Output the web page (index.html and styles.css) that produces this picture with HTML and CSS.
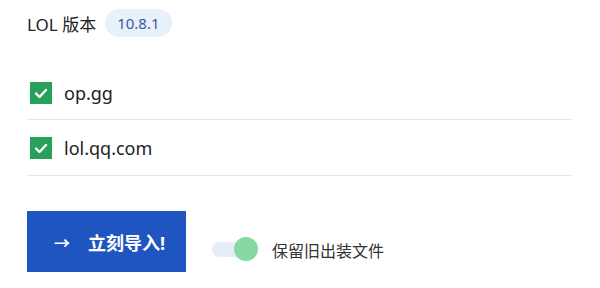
FILE: index.html
```html
<!DOCTYPE html>
<html lang="zh">
<head>
    <meta charset="UTF-8">
    <title>导入</title>
    <link rel="stylesheet" href="styles.css">
</head>
<body>
    <div class="panel">
        <div class="version-row">
            <span class="version-label">LOL 版本</span>
            <span class="version-badge">10.8.1</span>
        </div>
        <div class="sources">
            <div class="source-item">
                <span class="check">
                    <svg viewBox="0 0 22 22" width="22" height="22"><path d="M6 11.5l3.5 3.5 6.5-7" fill="none" stroke="#fff" stroke-width="2.4" stroke-linecap="round" stroke-linejoin="round"/></svg>
                </span>
                <span class="source-name">op.gg</span>
            </div>
            <div class="source-item">
                <span class="check">
                    <svg viewBox="0 0 22 22" width="22" height="22"><path d="M6 11.5l3.5 3.5 6.5-7" fill="none" stroke="#fff" stroke-width="2.4" stroke-linecap="round" stroke-linejoin="round"/></svg>
                </span>
                <span class="source-name">lol.qq.com</span>
            </div>
        </div>
        <div class="actions">
            <button class="import-btn"><span class="arrow">→</span>立刻导入!</button>
            <label class="toggle">
                <span class="track"><span class="knob"></span></span>
                <span class="toggle-text">保留旧出装文件</span>
            </label>
        </div>
    </div>
</body>
</html>
```

FILE: styles.css
```css
* {
    margin: 0;
    padding: 0;
    box-sizing: border-box;
    font-family: "Noto Sans", "Noto Sans CJK SC", sans-serif;
}
body, html {
    width: 100%;
    height: 100%;
    overflow: hidden;
    background: white;
}
.panel {
    padding: 9px 28px 0 27px;
    display: flex;
    flex-direction: column;
}
.version-row {
    display: flex;
    align-items: center;
    gap: 9px;
    height: 28px;
}
.version-label {
    font-size: 17px;
    color: #222;
}
.version-badge {
    background: #e8f0fb;
    color: #3a5a98;
    font-size: 15px;
    height: 28px;
    line-height: 28px;
    padding: 0 12px;
    border-radius: 14px;
}
.sources {
    margin-top: 34px;
    display: flex;
    flex-direction: column;
}
.source-item {
    display: flex;
    align-items: center;
    gap: 12px;
    height: 56px;
    padding-left: 3px;
    border-bottom: 1px solid #e6e6e6;
}
.source-item:first-child {
    height: 49px;
    padding-bottom: 4px;
}
.check {
    width: 22px;
    height: 22px;
    background: #27a05a;
    display: flex;
}
.source-name {
    font-size: 18px;
    color: #222;
}
.actions {
    margin-top: 35px;
    display: flex;
    align-items: center;
    gap: 26px;
}
.import-btn {
    width: 159px;
    height: 61px;
    border: none;
    background: #1f55c1;
    color: white;
    font-size: 18px;
    font-weight: bold;
    display: flex;
    align-items: center;
    padding-left: 27px;
}
.arrow {
    margin-right: 18px;
    font-size: 16px;
}
.toggle {
    display: flex;
    align-items: center;
    gap: 14px;
    margin-top: 16px;
}
.track {
    position: relative;
    width: 38px;
    height: 15px;
    border-radius: 8px;
    background: #e6ecf8;
}
.knob {
    position: absolute;
    right: -8px;
    top: -5px;
    width: 24px;
    height: 24px;
    border-radius: 50%;
    background: #86d9a0;
}
.toggle-text {
    margin-left: 8px;
    font-size: 16px;
    color: #333;
}
```
